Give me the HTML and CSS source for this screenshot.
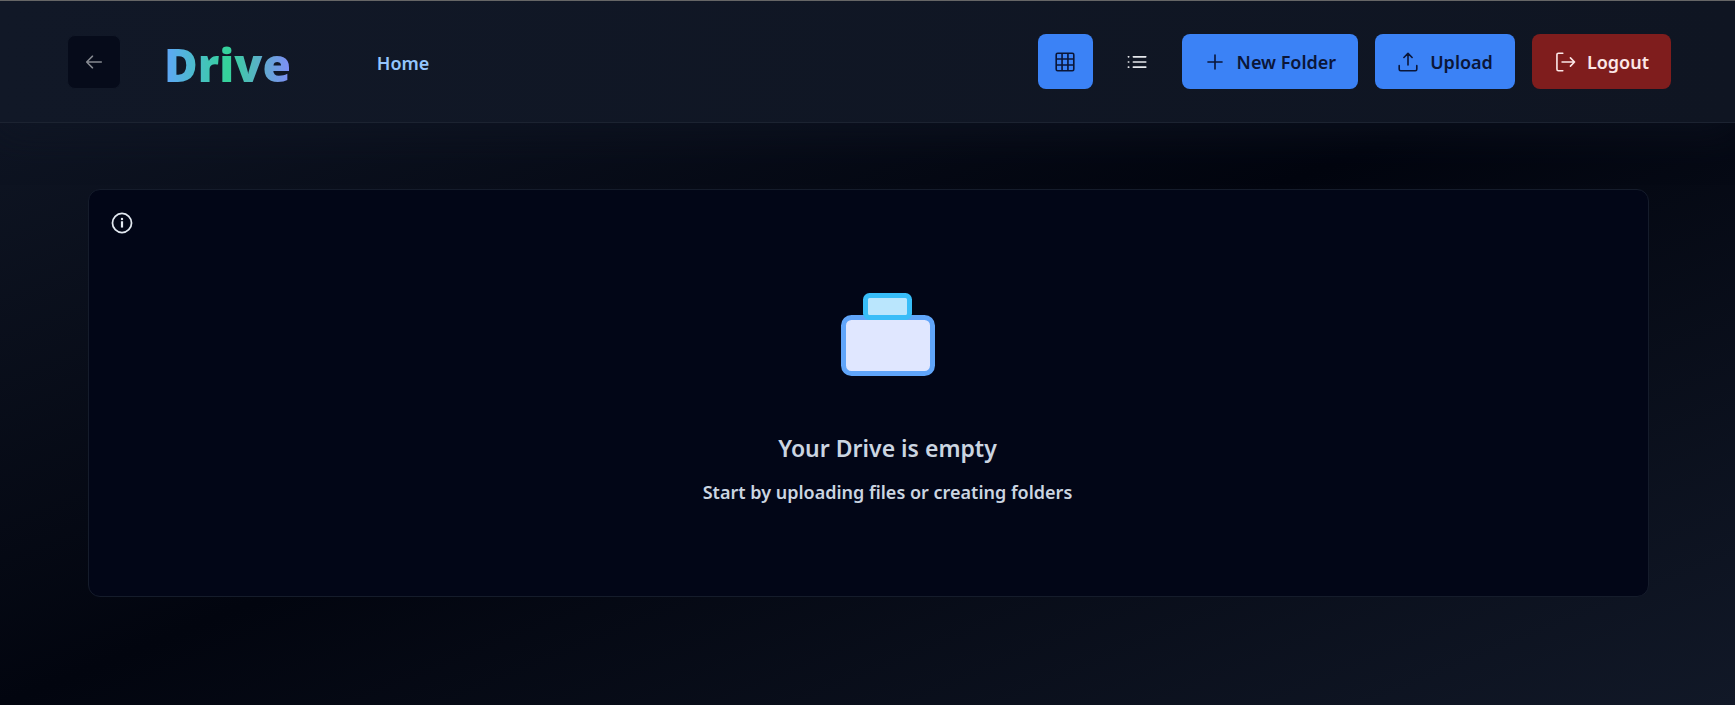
FILE: index.html
```
<!DOCTYPE html>
<html lang="en">
<head>
<meta charset="utf-8">
<meta name="viewport" content="width=device-width, initial-scale=1">
<title>Drive</title>
<link rel="stylesheet" href="styles.css">
</head>
<body>
<header class="topbar">
  <button class="back" type="button" aria-label="Back" disabled>
    <svg class="icon" viewBox="0 0 15 15" fill="currentColor"><path fill-rule="evenodd" clip-rule="evenodd" d="M6.85355 3.14645C7.04882 3.34171 7.04882 3.65829 6.85355 3.85355L3.70711 7H12.5C12.7761 7 13 7.22386 13 7.5C13 7.77614 12.7761 8 12.5 8H3.70711L6.85355 11.1464C7.04882 11.3417 7.04882 11.6583 6.85355 11.8536C6.65829 12.0488 6.34171 12.0488 6.14645 11.8536L2.14645 7.85355C1.95118 7.65829 1.95118 7.34171 2.14645 7.14645L6.14645 3.14645C6.34171 2.95118 6.65829 2.95118 6.85355 3.14645Z"/></svg>
  </button>
  <h1 class="brand">Drive</h1>
  <nav class="crumbs" aria-label="Breadcrumb"><a href="#">Home</a></nav>
  <div class="actions">
    <button class="btn btn-square btn-primary" type="button" aria-label="Grid view" aria-pressed="true">
      <svg class="icon" viewBox="0 0 15 15" fill="none" stroke="currentColor" stroke-width="1.1"><rect x="1.5" y="1.5" width="12" height="12" rx="1"/><path d="M5.5 1.5v12M9.5 1.5v12M1.5 5.5h12M1.5 9.5h12"/></svg>
    </button>
    <button class="btn btn-square btn-ghost" type="button" aria-label="List view" aria-pressed="false">
      <svg class="icon" viewBox="0 0 15 15" fill="none" stroke="currentColor" stroke-width="1.1" stroke-linecap="round"><path d="M5 4h8.500M5 7.500h8.500M5 11h8.500M1.600 4h.3M1.600 7.500h.3M1.600 11h.3"/></svg>
    </button>
    <button class="btn btn-primary" type="button">
      <svg class="icon" viewBox="0 0 15 15" fill="none" stroke="currentColor" stroke-width="1.1" stroke-linecap="round"><path d="M7.5 2.700v9.600M2.700 7.500h9.600"/></svg>
      New Folder
    </button>
    <button class="btn btn-primary" type="button">
      <svg class="icon" viewBox="0 0 15 15" fill="none" stroke="currentColor" stroke-width="1.1" stroke-linecap="round" stroke-linejoin="round"><path d="M7.5 9.500V2M4.700 4.400l2.800-2.800 2.800 2.800M1.500 10v2.500a1 1 0 0 0 1 1h10a1 1 0 0 0 1-1V10"/></svg>
      Upload
    </button>
    <button class="btn btn-danger" type="button">
      <svg class="icon" viewBox="0 0 15 15" fill="none" stroke="currentColor" stroke-width="1.1" stroke-linecap="round" stroke-linejoin="round"><path d="M6 1.500H3a1 1 0 0 0-1 1v10a1 1 0 0 0 1 1h3M5.500 7.500h8.500M11.200 4.700l2.800 2.800-2.800 2.800"/></svg>
      Logout
    </button>
  </div>
</header>
<main class="content">
  <section class="card">
    <button class="info" type="button" aria-label="Information">
      <svg class="icon" viewBox="0 0 15 15" fill="none" stroke="currentColor"><circle cx="7.5" cy="7.5" r="6.5" stroke-width="1.2"/><path d="M7.500 6.300v4.300" stroke-width="1.5"/><circle cx="7.500" cy="4.800" r=".8" fill="currentColor" stroke="none"/></svg>
    </button>
    <div class="empty">
      <svg class="art" viewBox="0 0 94 84" aria-hidden="true"><rect x="2.500" y="24.500" width="89" height="56" rx="8" fill="#e0e7ff" stroke="#60a5fa" stroke-width="5"/><rect x="22.500" y="2.500" width="44" height="22" rx="4" transform="translate(2)" fill="#bae6fd" stroke="#38bdf8" stroke-width="5"/></svg>
      <h2 class="title">Your Drive is empty</h2>
      <p class="hint">Start by uploading files or creating folders</p>
    </div>
  </section>
</main>
</body>
</html>
```
FILE: styles.css
```
* { box-sizing: border-box; }

body {
  margin: 0;
  min-height: 100vh;
  color: #cbd5e1;
  font-family: "Segoe UI", "Noto Sans", sans-serif;
  font-size: 18px;
  background: linear-gradient(to bottom right, #111827, #02050f 50%, #111827);
}

button { font: inherit; cursor: pointer; }
svg { display: block; flex: none; }

.topbar {
  display: flex;
  align-items: center;
  min-height: 123px;
  padding: 0 64px 0 67px;
  background: linear-gradient(to right, #111827, #0f1522);
  border-top: 1px solid #666;
  border-bottom: 1px solid #1c2331;
  box-shadow: 0 8px 36px #11182799;
}

.back {
  display: grid;
  place-items: center;
  width: 54px;
  height: 54px;
  padding: 0;
  color: #868a91;
  background: #060b1a;
  border: 1px solid #111827;
  border-radius: 8px;
}
.icon { width: 22px; height: 22px; }

.brand {
  margin: 0 0 0 43px;
  padding-top: 5px;
  font-size: 46px;
  line-height: 60px;
  font-weight: 900;
  color: transparent;
  background: linear-gradient(to right, #60a5fa, #34d399, #818cf8);
  -webkit-background-clip: text;
  background-clip: text;
}

.crumbs { margin-left: 86px; padding-top: 2px; }
.crumbs a { color: #93c5fd; font-weight: 600; text-decoration: none; }

.actions { display: flex; gap: 17px; margin-left: auto; }

.btn {
  display: flex;
  align-items: center;
  gap: 11px;
  height: 55px;
  padding: 0 22px;
  border: 0;
  border-radius: 8px;
  font-weight: 600;
}
.btn-square { width: 55px; padding: 0; justify-content: center; }
.btn-primary { background: #3b82f6; color: #0b1638; }
.btn-ghost { background: transparent; color: #e5e7eb; }
.btn-danger { background: #7f1d1d; color: #fce7e7; }

.content { padding: 66px 86px 66px 88px; }

.card {
  display: flex;
  align-items: flex-start;
  gap: 16px;
  min-height: 408px;
  padding: 22px;
  background: #020617;
  border: 1px solid #151c2b;
  border-radius: 12px;
}
.info { padding: 0; border: 0; background: none; color: #e2e8f0; }

.empty {
  flex: 1;
  display: flex;
  flex-direction: column;
  align-items: center;
  padding-top: 81px;
  text-align: center;
}
.art { width: 94px; height: 84px; }
.title { margin: 55px 0 0; font-size: 23px; line-height: 32px; font-weight: 600; }
.hint { margin: 14px 0 0; line-height: 28px; font-weight: 600; }
```
